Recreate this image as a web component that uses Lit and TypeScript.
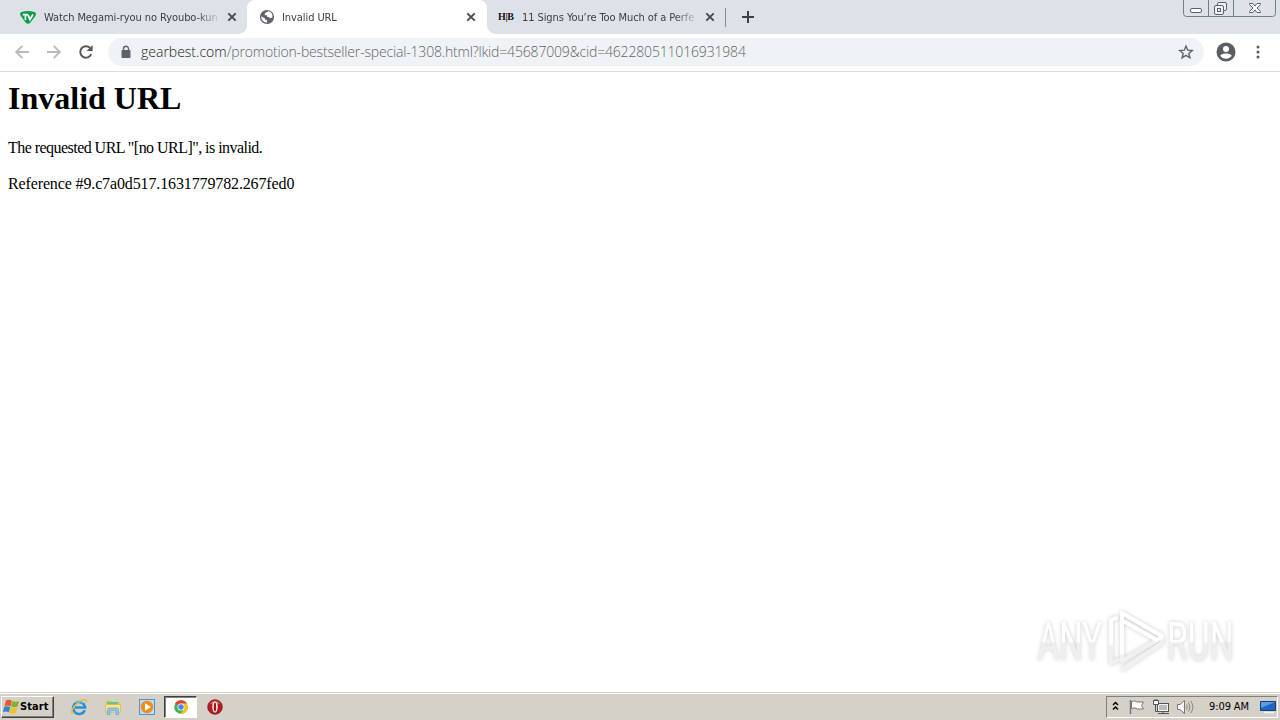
import { LitElement, html, svg, css, nothing } from 'lit';
import { customElement, property } from 'lit/decorators.js';
import { classMap } from 'lit/directives/class-map.js';

interface TabInfo {
  title: string;
  icon: 'tv' | 'globe' | 'hb';
  active?: boolean;
}

const TABS: TabInfo[] = [
  { title: 'Watch Megami-ryou no Ryoubo-kun', icon: 'tv' },
  { title: 'Invalid URL', icon: 'globe', active: true },
  { title: '11 Signs You’re Too Much of a Perfe', icon: 'hb' },
];

const FAVICONS = {
  tv: svg`
    <path d="M1.5 3Q8 .8 14.5 3Q17 4 15.4 7L10 14Q8 15.6 6 14L.8 7Q-1 4 1.5 3Z" fill="#0c9d4b"/>
    <path d="M2.8 5.6H8M5.4 5.6V11M8 5.8L10 10.5L13 5.3" fill="none" stroke="#fff" stroke-width="1.7"/>`,
  globe: svg`
    <circle cx="8" cy="8" r="7.1" fill="#5f6368"/>
    <path d="M9.4 2.3L5.8 4.3V6.2H8.1V8H10.5V9.5L13.4 8.5A5.5 5.5 0 0 0 9.4 2.3ZM2.2 7.3L6.1 9.4V10.8L8 11V13.7A6 6 0 0 1 2.2 7.3Z" fill="#fff"/>`,
  hb: nothing,
};

@customElement('browser-tab')
export class BrowserTab extends LitElement {
  @property({ attribute: false }) tab!: TabInfo;

  static styles = css`
    :host { display: block; width: 239px; height: 34px; }
    .tab {
      position: relative;
      display: flex;
      align-items: center;
      height: 34px;
      padding: 0 10px 0 12px;
      box-sizing: border-box;
      color: #3c4043;
    }
    .tab.active {
      background: #fff;
      border-radius: 8px 8px 0 0;
      width: 240px;
    }
    /* curved feet of the selected tab */
    .active::before, .active::after {
      content: '';
      position: absolute;
      bottom: 0;
      width: 8px;
      height: 8px;
    }
    .active::before { left: -8px; background: radial-gradient(circle at 0 0, transparent 7.5px, #fff 8px); }
    .active::after { right: -8px; background: radial-gradient(circle at 100% 0, transparent 7.5px, #fff 8px); }
    .favicon { width: 16px; height: 16px; flex: none; }
    .hb {
      font: bold 10px/16px "Liberation Serif", serif;
      letter-spacing: -0.4px;
      white-space: nowrap;
      color: #111;
    }
    .title {
      width: 175px;
      margin-left: 7px;
      padding: 1px 0 0 1px;
      box-sizing: border-box;
      overflow: hidden;
      white-space: nowrap;
      font: 11px/16px "DejaVu Sans Condensed", "DejaVu Sans", sans-serif;
      font-stretch: condensed;
      letter-spacing: -0.08px;
      -webkit-mask-image: linear-gradient(90deg, #000 154px, transparent 178px);
      mask-image: linear-gradient(90deg, #000 154px, transparent 178px);
    }
    .active .title { padding-left: 0; }
    .close { width: 10px; height: 10px; margin-left: 9px; flex: none; }
  `;

  render() {
    const { title, icon, active } = this.tab;
    return html`
      <div class=${classMap({ tab: true, active: !!active })}>
        ${icon === 'hb'
          ? html`<div class="favicon hb">H|B</div>`
          : html`<svg class="favicon" viewBox="0 0 16 16">${FAVICONS[icon]}</svg>`}
        <div class="title">${title}</div>
        <svg class="close" viewBox="0 0 10 10">
          <path d="M1.3 1.3L8.7 8.7M8.7 1.3L1.3 8.7" stroke="#45494f" stroke-width="1.9"/>
        </svg>
      </div>
    `;
  }
}

@customElement('window-buttons')
export class WindowButtons extends LitElement {
  static styles = css`
    :host { display: block; }
    svg { display: block; }
  `;

  render() {
    return html`
      <svg width="94" height="18" viewBox="0 0 94 18" fill="none" stroke="#777d87">
        <path d="M.5 0V13.5Q.5 16.5 3.5 16.5H89.5Q92.5 16.5 92.5 13.5V0M25.5 0V16M50.5 0V16"/>
        <rect x="7.5" y="8.5" width="11" height="4" rx="1.5" fill="#fff" stroke="#5b606b"/>
        <g stroke="#5b606b" fill="#f1f2f4">
          <rect x="34.5" y="2.5" width="9" height="8" rx="1.5"/>
          <rect x="31.5" y="5.5" width="9" height="9" rx="1.5"/>
          <rect x="34.5" y="8.5" width="3" height="3"/>
        </g>
        <path d="M66.5 3.5H70L72 6L74 3.5H77.5V4.5L74 8L77.5 11.5V12.5H74L72 10L70 12.5H66.5V11.5L70 8L66.5 4.5Z" fill="#fff" stroke="#5b606b"/>
      </svg>
    `;
  }
}

@customElement('browser-toolbar')
export class BrowserToolbar extends LitElement {
  static styles = css`
    :host { display: block; }
    .bar {
      display: flex;
      align-items: center;
      height: 38px;
      padding: 0 0 1px 14px;
      box-sizing: border-box;
      background: #fff;
      border-bottom: 1px solid #d9dbdf;
    }
    svg { display: block; flex: none; }
    .nav { display: flex; gap: 16px; }
    .omnibox {
      display: flex;
      align-items: center;
      width: 1096px;
      height: 28px;
      margin-left: 14px;
      padding: 0 10px;
      box-sizing: border-box;
      border-radius: 14px;
      background: #f0f3f5;
    }
    .url {
      flex: 1;
      margin-left: 7px;
      white-space: nowrap;
      font: 300 14px/20px "Open Sans", "Noto Sans", sans-serif;
      letter-spacing: -0.17px;
      color: #5f6368;
    }
    .host { color: #202124; letter-spacing: 0; }
    .avatar { margin-left: 12px; }
    .menu { margin-left: 12px; }
  `;

  render() {
    return html`
      <div class="bar">
        <div class="nav">
          <svg width="16" height="16" viewBox="0 0 16 16" fill="none" stroke="#b8babd" stroke-width="1.8">
            <path d="M15 8H2.5M8.3 1.8L2.1 8L8.3 14.2"/>
          </svg>
          <svg width="16" height="16" viewBox="0 0 16 16" fill="none" stroke="#b8babd" stroke-width="1.8">
            <path d="M1 8H13.5M7.7 1.8L13.9 8L7.7 14.2"/>
          </svg>
          <svg width="16" height="16" viewBox="0 0 16 16">
            <path d="M13.2 10.2A5.7 5.7 0 1 1 12.1 4" fill="none" stroke="#54575c" stroke-width="2"/>
            <path d="M14.6 1V7H8.6Z" fill="#54575c"/>
          </svg>
        </div>
        <div class="omnibox">
          <svg width="16" height="16" viewBox="0 0 16 16">
            <rect x="3.5" y="6" width="9" height="8" rx="1" fill="#5f6368"/>
            <path d="M5.5 6.5V4.8A2.5 2.5 0 0 1 10.5 4.8V6.5" fill="none" stroke="#5f6368" stroke-width="1.4"/>
          </svg>
          <div class="url"><span class="host">gearbest.com</span>/promotion-bestseller-special-1308.html?lkid=45687009&amp;cid=462280511016931984</div>
          <svg width="16" height="16" viewBox="0 0 16 16">
            <path d="M8 2.1L9.7 6.2L14.2 6.5L10.8 9.4L11.9 13.8L8 11.4L4.1 13.8L5.2 9.4L1.8 6.5L6.3 6.2Z" fill="none" stroke="#5f6368" stroke-width="1.4"/>
          </svg>
        </div>
        <svg class="avatar" width="20" height="20" viewBox="0 0 20 20">
          <circle cx="10" cy="10" r="9.5" fill="#5a5d63"/>
          <circle cx="10" cy="7" r="3" fill="#fff"/>
          <path d="M4.2 13.7C5.5 11.9 8.2 11.5 10 11.5S14.5 11.9 15.8 13.7A7 7 0 0 1 4.2 13.7Z" fill="#fff"/>
        </svg>
        <svg class="menu" width="20" height="20" viewBox="0 0 20 20" fill="#5a5d63">
          <circle cx="10" cy="5" r="1.5"/><circle cx="10" cy="10" r="1.5"/><circle cx="10" cy="15" r="1.5"/>
        </svg>
      </div>
    `;
  }
}

@customElement('error-page')
export class ErrorPage extends LitElement {
  static styles = css`
    :host {
      position: relative;
      display: block;
      flex: 1;
      background: #fff;
      color: #000;
      font: 16px/18px "Liberation Serif", serif;
    }
    h1 {
      margin: 0;
      padding: 8px 8px 0;
      font-size: 32px;
      line-height: 37px;
    }
    p { margin: 0; padding: 0 8px; }
    .message { margin-top: 22px; letter-spacing: -0.54px; }
    .reference { margin-top: 18px; letter-spacing: -0.13px; }
    .watermark {
      position: absolute;
      right: 36px;
      bottom: 15px;
      filter: drop-shadow(0 0 2px rgba(0, 0, 0, 0.2));
    }
    text { font: 53px "Roboto", sans-serif; }
  `;

  render() {
    return html`
      <h1>Invalid URL</h1>
      <p class="message">The requested URL "[no URL]", is invalid.</p>
      <p class="reference">Reference #9.c7a0d517.1631779782.267fed0</p>
      <svg class="watermark" width="210" height="74" viewBox="0 0 210 74">
        <defs>
          <linearGradient id="shade" gradientUnits="userSpaceOnUse" x1="0" y1="0" x2="0" y2="74">
            <stop offset=".52" stop-color="#fff"/>
            <stop offset=".54" stop-color="#efefef"/>
          </linearGradient>
        </defs>
        <g fill="url(#shade)" transform="scale(.64 1)">
          <text x="6" y="57" textLength="100" lengthAdjust="spacingAndGlyphs">ANY</text>
          <text x="208" y="57" textLength="104" lengthAdjust="spacingAndGlyphs">RUN</text>
        </g>
        <g fill="none" stroke-width="4" stroke-linejoin="round" stroke-linecap="round">
          <path d="M82 15L77 17V60L84 57M88 50V58L123 37M89 66L128 40V34" stroke="#f1f1f1"/>
          <path d="M77 40V17L82 15M88 50V10L128 33L123 37L89 18" stroke="#fff"/>
        </g>
      </svg>
    `;
  }
}

@customElement('task-bar')
export class TaskBar extends LitElement {
  static styles = css`
    :host { display: block; }
    .bar {
      display: flex;
      align-items: center;
      height: 28px;
      padding: 2px 2px 2px 1px;
      box-sizing: border-box;
      background: #d5d0c8;
      border-top: 1px solid #d5d0c8;
      box-shadow: inset 0 1px #fff;
      color: #000;
    }
    svg { display: block; flex: none; }
    .start {
      display: flex;
      align-items: center;
      width: 53px;
      height: 22px;
      padding-left: 1px;
      box-sizing: border-box;
      border: 1px solid;
      border-color: #fff #404040 #404040 #fff;
      box-shadow: inset -1px -1px #808080;
      font: bold 11px/18px "DejaVu Sans Condensed", "DejaVu Sans", sans-serif;
      font-stretch: condensed;
      letter-spacing: 0.1px;
    }
    .launch { display: flex; margin-left: 8px; gap: 1px; }
    .slot {
      display: flex;
      align-items: center;
      justify-content: center;
      width: 33px;
      height: 22px;
      box-sizing: border-box;
    }
    .slot.pressed {
      background: #fff;
      border: 1px solid;
      border-color: #404040 #fff #fff #404040;
      box-shadow: inset 1px 1px #808080;
    }
    .tray {
      display: flex;
      align-items: center;
      width: 172px;
      height: 22px;
      margin-left: auto;
      box-sizing: border-box;
      border: 1px solid;
      border-color: #808080 #fff #fff #808080;
    }
    .clock {
      width: 41px;
      margin: 0 10px 0 14px;
      white-space: nowrap;
      font: 11px/18px "DejaVu Sans Condensed", "DejaVu Sans", sans-serif;
      font-stretch: condensed;
      letter-spacing: -0.1px;
    }
  `;

  render() {
    return html`
      <div class="bar">
        <div class="start">
          <svg width="17" height="17" viewBox="0 0 17 17">
            <path d="M3 2.4Q6 .8 8.8 2.6L7.6 8.2Q4.5 6.8 1.5 8.2Z" fill="#e9562b"/>
            <path d="M9.3 3Q12.5 4.6 16.3 3L14.6 8.6Q11.2 10 8 8.5Z" fill="#79b72f"/>
            <path d="M1.3 8.8Q4.2 7.5 7.3 8.9L5.8 14.3Q3 12.9 0 14.3Z" fill="#2d83d2"/>
            <path d="M7.9 9.2Q11 10.6 14.4 9.3L12.8 14.9Q9.6 16.5 6.4 14.7Z" fill="#f7bd25"/>
          </svg>
          Start
        </div>
        <div class="launch">
          <div class="slot">
            <svg width="18" height="18" viewBox="0 0 18 18" fill="none">
              <path d="M14.8 12.2A6 6 0 1 1 15 8.5V9.5H5" stroke="#2792d8" stroke-width="2.6"/>
              <path d="M5 4.4A6 6 0 0 1 13 5" stroke="#72cdf2" stroke-width="1.2"/>
              <path d="M2.7 16.2C-1 13 7 3 14.2 1.6Q17.5 1.3 15.8 5" stroke="#e7b93e" stroke-width="1.4"/>
            </svg>
          </div>
          <div class="slot">
            <svg width="18" height="18" viewBox="0 0 18 18">
              <path d="M2 2.5H7L8.5 4H16V14H2Z" fill="#e9c553"/>
              <path d="M3 4H14V8H3Z" fill="#6cc184"/>
              <path d="M1.5 6.5H16.5V14H1.5Z" fill="#f9e591" stroke="#ddb54c" stroke-width=".7"/>
              <path d="M3.5 16.5V11.5Q3.5 10 5 10H13Q14.5 10 14.5 11.5V16.5H12V12.5H6V16.5Z" fill="#8dccef" stroke="#4b9dcb" stroke-width=".6"/>
            </svg>
          </div>
          <div class="slot">
            <svg width="18" height="18" viewBox="0 0 18 18">
              <rect x="1.5" y="1.5" width="15" height="15" fill="#b9dcf4" stroke="#5792c3"/>
              <circle cx="9" cy="9" r="6.2" fill="#f28b18"/>
              <path d="M7 5.2V12.8L13 9Z" fill="#fff"/>
            </svg>
          </div>
          <div class="slot pressed">
            <svg width="16" height="16" viewBox="0 0 16 16">
              <circle cx="8" cy="8" r="6.8" fill="#4caf50"/>
              <path d="M8 8L2.1 4.6A6.8 6.8 0 0 1 13.9 4.6H8Z" fill="#e64335"/>
              <path d="M8 4.6H13.9A6.8 6.8 0 0 1 8 14.8L11 9.7Z" fill="#fbc116"/>
              <circle cx="8" cy="8" r="3.5" fill="#fff"/>
              <circle cx="8" cy="8" r="2.7" fill="#4285f4"/>
            </svg>
          </div>
          <div class="slot">
            <svg width="16" height="16" viewBox="0 0 16 16">
              <circle cx="8" cy="8" r="7.3" fill="#b71920" stroke="#841015" stroke-width=".7"/>
              <path d="M3 4.5Q8 -1 13 4.5Q8 7 3 4.5Z" fill="#df6868"/>
              <ellipse cx="8" cy="8" rx="2.7" ry="5.5" fill="#fff"/>
              <ellipse cx="8" cy="8" rx="1.2" ry="4.6" fill="#9d151a"/>
            </svg>
          </div>
        </div>
        <div class="tray">
          <svg width="88" height="20" viewBox="0 0 88 20" fill="none">
            <path d="M6 8L8.5 5.5L11 8M6 12.5L8.5 10L11 12.5" stroke="#000" stroke-width="1.5"/>
            <path d="M23.5 3V17" stroke="#777" stroke-width="1.5"/>
            <path d="M24.5 4.5Q27.5 3 30.5 5H36.5L34.5 8.5L36.5 12H30.5Q27.5 10 24.5 11.5Z" fill="#fff" stroke="#777"/>
            <rect x="50.5" y="6.5" width="11" height="8" fill="#f3f3f3" stroke="#555"/>
            <rect x="52" y="8" width="8" height="5" fill="#bbb"/>
            <path d="M51 16.5H62M56 14.5V16.5M48.5 8V14.5H51" stroke="#555"/>
            <path d="M46.5 3.5H51.5V7.5H46.5ZM48 2V4M50 2V4" fill="#fff" stroke="#555"/>
            <path d="M70.5 7.5H73L77.5 3.5V16.5L73 12.5H70.5Z" fill="#fff" stroke="#777"/>
            <path d="M79.5 7.5Q81 10 79.5 12.5M81.5 5.5Q84.5 10 81.5 14.5M83.8 4Q88 10 83.8 16" stroke="#888"/>
          </svg>
          <div class="clock">9:09 AM</div>
          <svg width="16" height="14" viewBox="0 0 16 14">
            <path d="M.5 1.5H15.5V10.5H.5Z" fill="#1d65c5" stroke="#173e72"/>
            <path d="M1 2H15L1 8Z" fill="#5d9be5"/>
            <path d="M4 12.5H14" stroke="#edf3fa" stroke-width="1.5"/>
          </svg>
        </div>
      </div>
    `;
  }
}

@customElement('app-root')
export class AppRoot extends LitElement {
  static styles = css`
    :host {
      display: flex;
      flex-direction: column;
      width: 1280px;
      height: 720px;
      overflow: hidden;
      background: #fff;
    }
    .strip {
      display: flex;
      flex: none;
      height: 34px;
      padding: 0 3px 0 8px;
      background: #dde1e8;
    }
    .divider {
      width: 1px;
      height: 19px;
      margin-top: 8px;
      background: #888c92;
    }
    .add { margin: 11px 0 0 16px; }
    window-buttons { margin-left: auto; }
    browser-toolbar, task-bar { flex: none; }
  `;

  render() {
    return html`
      <div class="strip">
        ${TABS.map((tab) => html`<browser-tab .tab=${tab}></browser-tab>`)}
        <div class="divider"></div>
        <svg class="add" width="12" height="12" viewBox="0 0 12 12">
          <path d="M6 0V12M0 6H12" stroke="#3c4043" stroke-width="2"/>
        </svg>
        <window-buttons></window-buttons>
      </div>
      <browser-toolbar></browser-toolbar>
      <error-page></error-page>
      <task-bar></task-bar>
    `;
  }
}
